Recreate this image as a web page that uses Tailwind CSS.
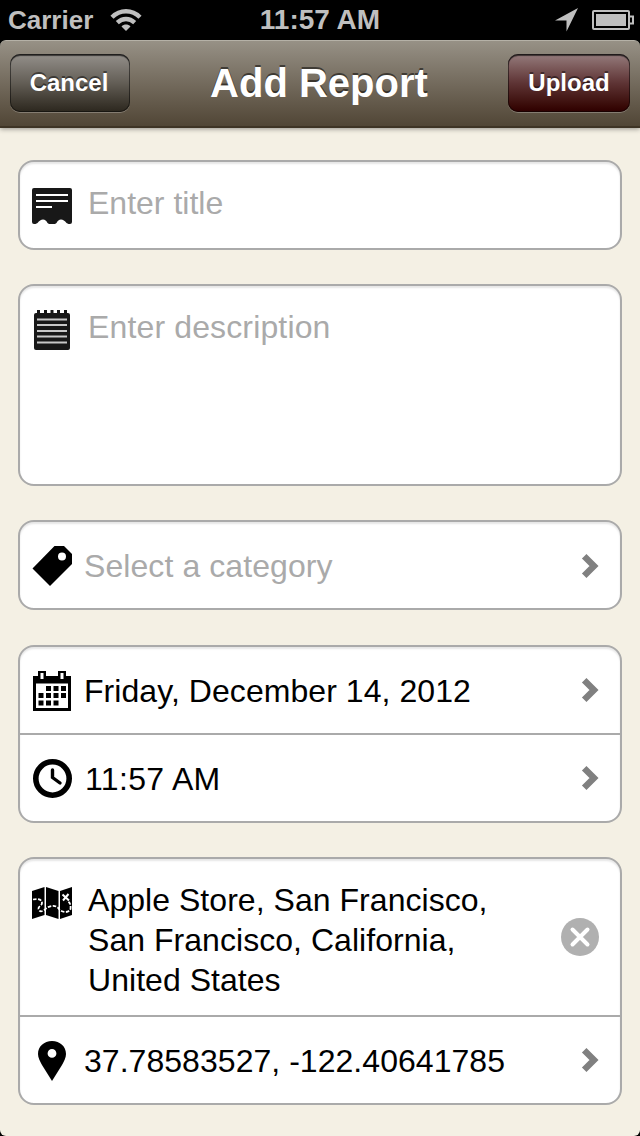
<!DOCTYPE html>
<html lang="en">
<head>
<meta charset="utf-8">
<title>Add Report</title>
<script src="https://cdn.jsdelivr.net/npm/@tailwindcss/browser@4"></script>
</head>
<body class="bg-black">
<svg class="hidden"><defs><path id="chev" d="M3.200 3.200L13 13L3.200 22.800" fill="none" stroke="#808080" stroke-width="6.400"/></defs></svg>
<div class="flex h-[1136px] w-[640px] flex-col overflow-hidden bg-black font-['Liberation_Sans',Arial,sans-serif] text-black">

  <!-- Status bar -->
  <div class="grid h-10 grid-cols-3 items-center text-[#bfbfbf]">
    <div class="flex items-center pl-2">
      <span class="w-[102px] text-[26px] leading-10 font-bold">Carrier</span>
      <svg class="h-[24px] w-[32px]" viewBox="0 0 32 24" fill="none" stroke="#bfbfbf" stroke-width="4.4"><path d="M2 9.200C10 1.200 22 1.200 30 9.200"/><path d="M7.300 14.600C12.500 9.700 19.500 9.700 24.700 14.600"/><path d="M16 23L11.500 18.500C14 15.900 18 15.900 20.500 18.500Z" fill="#bfbfbf" stroke="none"/></svg>
    </div>
    <div class="text-center text-[28px] leading-10 font-bold whitespace-nowrap">11:57 AM</div>
    <div class="flex items-center justify-end gap-3.5 pr-1.5">
      <svg class="h-6 w-[23px]" viewBox="0 0 23 24" fill="#bfbfbf"><path d="M23 0L11.500 23.500V12.500H0Z"/></svg>
      <svg class="h-5 w-[42px]" viewBox="0 0 42 20" fill="none" stroke="#bfbfbf" stroke-width="2"><rect x="1" y="1" width="36" height="18" rx="1"/><rect x="4" y="4" width="30" height="12" fill="#bfbfbf" stroke="none"/><path d="M38 6.500H41V13.500H38"/></svg>
    </div>
  </div>

  <!-- Navigation bar -->
  <header class="relative z-10 flex h-[88px] shrink-0 items-start justify-between rounded-t-[6px] border-t border-b-2 border-t-[#b5b1a7] border-b-[#3e3425] bg-linear-to-b from-[#979186] to-[#514636] px-[10px] pt-[13px] text-white shadow-[0_1px_5px_rgba(0,0,0,0.4)]">
    <button class="h-[58px] w-[120px] rounded-[10px] bg-linear-to-b from-[#94908b] via-[#635e56] to-[#2c271e] text-[24px] font-bold shadow-[0_1px_0_rgba(255,255,255,0.25),inset_0_2px_1px_rgba(0,0,0,0.6),inset_0_0_0_1px_rgba(0,0,0,0.45)] [text-shadow:0_-2px_0_rgba(0,0,0,0.45)]"><span class="-ml-0.5">Cancel</span></button>
    <h1 class="pt-[5px] text-[40px] leading-[48px] font-bold [text-shadow:0_-2px_0_rgba(0,0,0,0.5)]">Add Report</h1>
    <button class="h-[58px] w-[122px] rounded-[10px] bg-linear-to-b from-[#957c7d] via-[#5e3435] to-[#2e0000] text-[24px] font-bold shadow-[0_1px_0_rgba(255,255,255,0.25),inset_0_2px_1px_rgba(0,0,0,0.6),inset_0_0_0_1px_rgba(0,0,0,0.45)] [text-shadow:0_-2px_0_rgba(0,0,0,0.45)]">Upload</button>
  </header>

  <!-- Form -->
  <main class="flex grow flex-col rounded-b-[6px] bg-[#f4f0e4] px-[18px] pt-8 text-[32px] leading-10">
    <section class="flex h-[90px] rounded-[16px] border-2 border-[#aaa] bg-white pt-[21px] pl-3 shadow-[inset_0_2px_2px_rgba(0,0,0,0.1)]">
      <svg class="mt-[5px] h-[37px] w-10" viewBox="0 0 40 37"><path fill="#181818" d="M2 0H38Q40 0 40 2V34Q40 36 38 36H36.500L34.500 35Q32 31.500 29 31.500Q26 31.500 24.500 35L23 36H17L15.500 35Q14 31.500 11 31.500Q8 31.500 5.500 35L3.500 36H2Q0 36 0 34V2Q0 0 2 0Z"/><path d="M4 7H36M4 13H36M4 19H20" stroke="#fff" stroke-width="2"/></svg>
      <span class="ml-4 text-[#aaa]">Enter title</span>
    </section>

    <section class="mt-[34px] flex h-[202px] rounded-[16px] border-2 border-[#aaa] bg-white pt-[21px] pl-3.5 shadow-[inset_0_2px_2px_rgba(0,0,0,0.1)]">
      <svg class="mt-[3px] h-10 w-9" viewBox="0 0 36 40"><rect y="3" width="36" height="37" rx="2" fill="#181818"/><path d="M4.500 0V5M11.500 0V5M18 0V5M24.500 0V5M31.500 0V5" stroke="#181818" stroke-width="3"/><path d="M3 9.500H33M3 15H33M3 21H33M3 26.500H33M3 32.500H33" stroke="#c8c8c8" stroke-width="2"/></svg>
      <span class="ml-[18px] tracking-[0.14px] text-[#aaa]">Enter description</span>
    </section>

    <section class="mt-[34px] flex h-[90px] items-center rounded-[16px] border-2 border-[#aaa] bg-white pr-5 pl-3 shadow-[inset_0_2px_2px_rgba(0,0,0,0.1)]">
      <svg class="mt-0.5 h-10 w-10" viewBox="0 0 40 40"><path fill-rule="evenodd" d="M22.500 0H32L40 8V18L18 40L0.500 22.500ZM30 6.500A4 4 0 1 0 30 14.500A4 4 0 1 0 30 6.500Z"/></svg>
      <span class="ml-3 grow pt-0.5 tracking-[0.08px] text-[#aaa]">Select a category</span>
      <svg class="mt-px h-[26px] w-[19px]" viewBox="0 0 19 26"><use href="#chev"/></svg>
    </section>

    <section class="mt-[35px] h-[178px] rounded-[16px] border-2 border-[#aaa] bg-white shadow-[inset_0_2px_2px_rgba(0,0,0,0.1)]">
      <div class="flex h-[88px] items-center border-b-2 border-[#aaa] pr-5 pl-[13px]">
        <svg class="mt-0.5 h-10 w-[38px]" viewBox="0 0 38 40"><path d="M0 5H38V40H0Z"/><path d="M5 0H13V9H5ZM25 0H33V9H25Z"/><path fill="#fff" d="M3 12.500H35V37H3ZM7.500 2H10.500V8H7.500ZM27.500 2H30.500V8H27.500Z"/><path d="M13 15H18V20H13ZM20.500 15H25.500V20H20.500ZM28 15H33V20H28ZM5.500 22H10.500V27H5.500ZM13 22H18V27H13ZM20.500 22H25.500V27H20.500ZM28 22H33V27H28ZM5.500 29.500H10.500V34.500H5.500ZM13 29.500H18V34.500H13ZM20.500 29.500H25.500V34.500H20.500Z"/></svg>
        <span class="ml-[13px] grow pt-[2px] tracking-[0.06px]">Friday, December 14, 2012</span>
        <svg class="h-[26px] w-[19px]" viewBox="0 0 19 26"><use href="#chev"/></svg>
      </div>
      <div class="flex h-[86px] items-center pr-5 pl-[13px]">
        <svg class="h-[39px] w-[39px]" viewBox="0 0 39 39" fill="none" stroke="#000"><circle cx="19.500" cy="19.500" r="16.700" stroke-width="5.600"/><path d="M19.500 11V18.500L27 24" stroke-width="3.400" stroke-linecap="round"/></svg>
        <span class="ml-[13px] grow pt-px tracking-[0.35px]">11:57 AM</span>
        <svg class="h-[26px] w-[19px]" viewBox="0 0 19 26"><use href="#chev"/></svg>
      </div>
    </section>

    <section class="mt-[34px] h-[248px] rounded-[16px] border-2 border-[#aaa] bg-white shadow-[inset_0_2px_2px_rgba(0,0,0,0.1)]">
      <div class="flex h-[158px] items-start border-b-2 border-[#aaa] pt-[21px] pr-[21px] pl-3">
        <svg class="mt-[7px] h-8 w-10" viewBox="0 0 40 32"><path d="M0 4L12.500 0V28L0 32ZM14 0L26.500 4V32L14 28ZM28 4L40 0V28L28 32Z"/><g fill="none" stroke="#fff" stroke-width="1.800"><path stroke-dasharray="3.500 1.500" d="M1 12.500C5 11.500 10 12 10 16C10 19 6 19 6.500 22C7.500 26 12 24 14 21.500C18 18 25 18 27 22C30 26 37 26 38.500 22C39 18 38 15 35 14"/><path stroke-width="2" d="M30.500 7.500L37 13.500M36.500 7L31 13.500"/></g></svg>
        <p class="ml-4 grow tracking-[0.04px]">Apple Store, San Francisco,<br>San Francisco, California,<br>United States</p>
        <svg class="mt-[38px] h-[38px] w-[38px]" viewBox="0 0 38 38"><circle cx="19" cy="19" r="19" fill="#b0b0b0"/><path d="M11.500 11.500L26.500 26.500M26.500 11.500L11.500 26.500" stroke="#fff" stroke-width="4" stroke-linecap="round"/></svg>
      </div>
      <div class="flex h-[86px] items-center pr-5 pl-[18px]">
        <svg class="mt-0.5 h-10 w-7" viewBox="0 0 28 40"><path fill-rule="evenodd" d="M14 0C22 0 28 5.500 28 13C28 17 26 20 24 24L14 40L4 24C2 20 0 17 0 13C0 5.500 6 0 14 0ZM14 8A4.400 4.400 0 1 0 14 16.800A4.400 4.400 0 1 0 14 8Z"/></svg>
        <span class="ml-[18px] grow pt-[2px] tracking-[0.04px]">37.78583527, -122.40641785</span>
        <svg class="h-[26px] w-[19px]" viewBox="0 0 19 26"><use href="#chev"/></svg>
      </div>
    </section>
  </main>
</div>
</body>
</html>
